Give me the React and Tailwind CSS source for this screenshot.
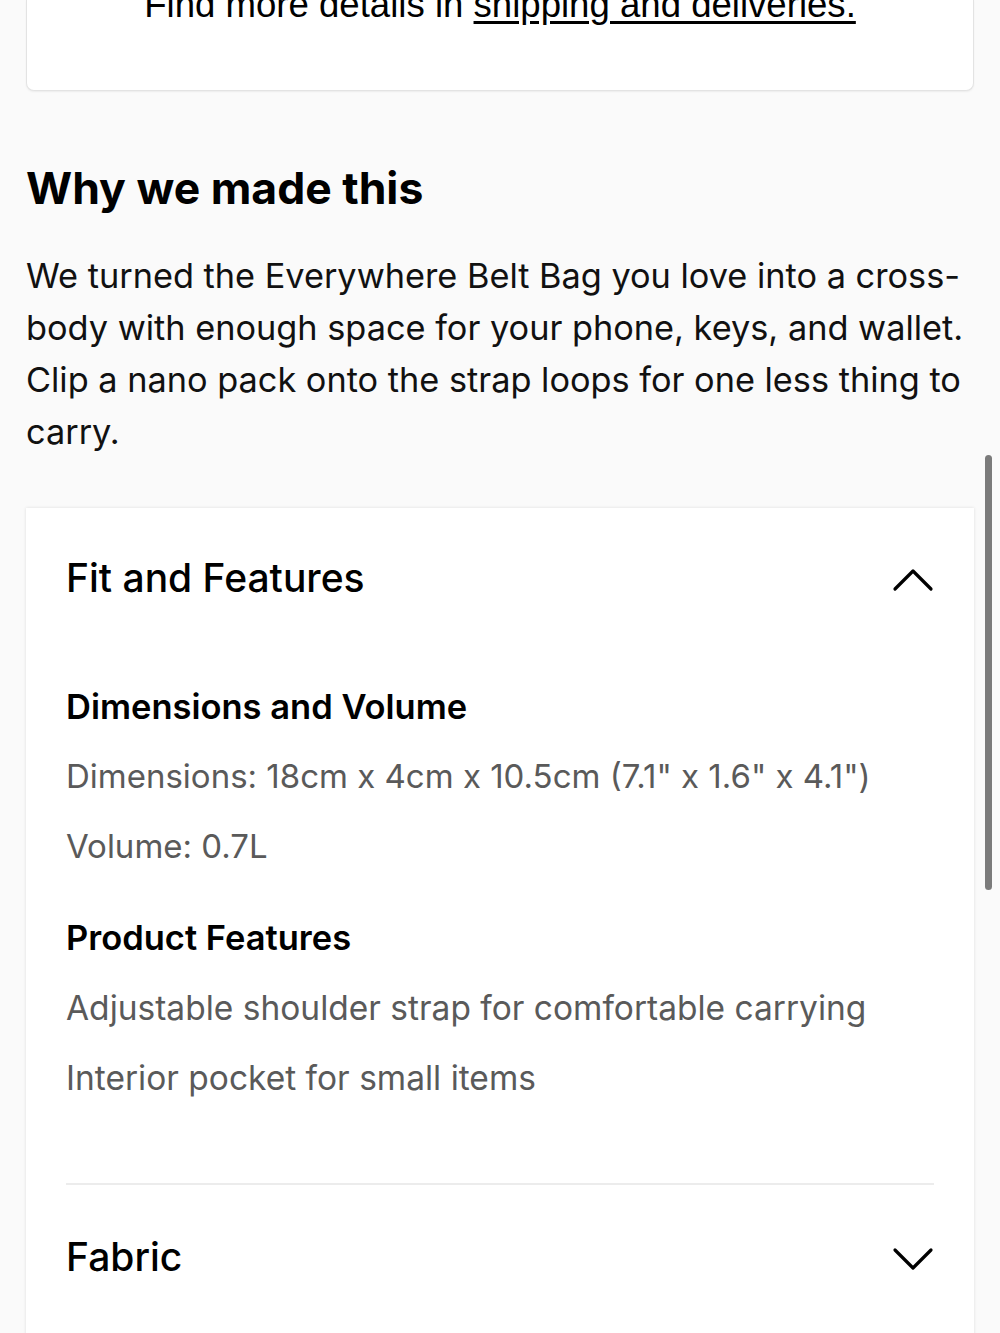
import React from 'react';

const Chevron = ({ up }) => (
  <svg width="42" height="24" viewBox="0 0 42 24" fill="none" className="shrink-0 mt-1">
    <polyline
      points={up ? '3,21 21,3 39,21' : '3,3 21,21 39,3'}
      stroke="#000"
      strokeWidth="3.2"
      strokeLinecap="round"
      strokeLinejoin="round"
    />
  </svg>
);

const App = () => {
  return (
    <div className="relative min-h-[1333px] bg-[#fafafa] overflow-hidden" style={{ fontFamily: 'Inter, "Noto Sans", sans-serif' }}>
      {/* Shipping card (clipped at top) */}
      <div className="flex flex-col mx-[26px] h-[91px] bg-white border-x border-b border-[#e3e3e3] rounded-b-lg shadow-[0_1px_2px_rgba(0,0,0,0.06)]">
        <p className="-mt-[17px] text-center text-[36.6px] leading-[44px] text-black" style={{ fontFamily: '"Liberation Sans", Arial, sans-serif' }}>
          Find more details in <span className="underline underline-offset-4">shipping and deliveries.</span>
        </p>
      </div>

      {/* Why we made this */}
      <div className="px-[26px]">
        <h2 className="mt-[69px] text-[44.5px] leading-[56px] font-bold text-black">Why we made this</h2>
        <p className="mt-[34px] text-[34.3px] leading-[52px] text-[#111]">
          We turned the Everywhere Belt Bag you love into a cross-body with enough space for your phone, keys, and wallet. Clip a nano pack onto the strap loops for one less thing to carry.
        </p>
      </div>

      {/* Accordion */}
      <div className="mx-[26px] mt-[50px] bg-white shadow-[0_0_3px_rgba(0,0,0,0.12)] px-10 pb-10">
        <div className="h-[140px] flex items-center justify-between">
          <h3 className="text-[39px] font-medium text-black">Fit and Features</h3>
          <Chevron up />
        </div>

        <div className="pt-[33px]">
          <h4 className="text-[34.5px] leading-[52px] font-semibold text-black">Dimensions and Volume</h4>
          <p className="mt-2 text-[33px] leading-[70px] text-[#5a5a5a]">Dimensions: 18cm x 4cm x 10.5cm (7.1" x 1.6" x 4.1")</p>
          <p className="text-[33px] leading-[70px] text-[#5a5a5a]">Volume: 0.7L</p>

          <h4 className="mt-[31px] text-[34.5px] leading-[52px] font-semibold text-black">Product Features</h4>
          <p className="mt-[9px] text-[33.5px] leading-[70px] text-[#5a5a5a]">Adjustable shoulder strap for comfortable carrying</p>
          <p className="text-[33.5px] leading-[70px] text-[#5a5a5a]">Interior pocket for small items</p>
        </div>

        <div className="mt-[70px] border-t-2 border-[#ececec]" />

        <div className="h-[144px] flex items-center justify-between">
          <h3 className="text-[39px] font-medium text-black">Fabric</h3>
          <Chevron />
        </div>
      </div>

      {/* Scrollbar overlay */}
      <div className="absolute left-[985px] top-[455px] w-[7px] h-[435px] rounded-full bg-[#7b7b7b]" />
    </div>
  );
};

export default App;
